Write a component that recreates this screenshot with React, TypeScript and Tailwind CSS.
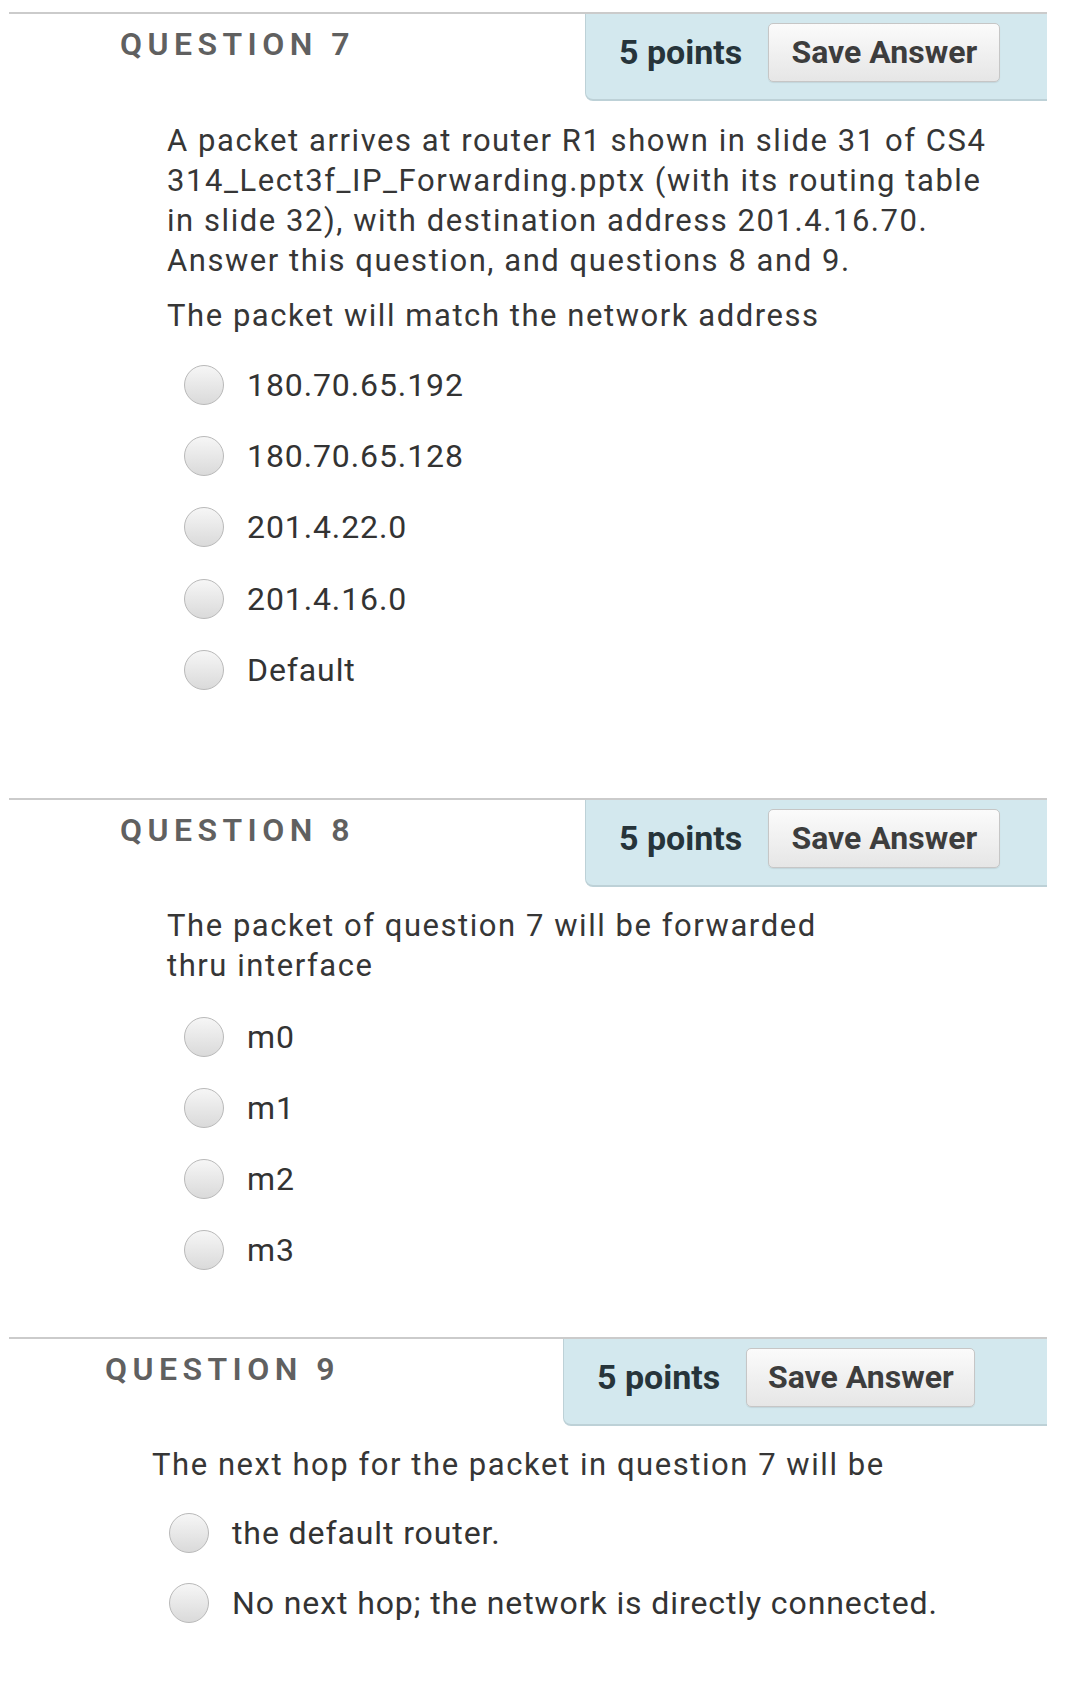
import React from "react";

type Question = {
  num: number;
  lines: string[];
  prompt?: string;
  options: string[];
  wrap: string;
  title: string;
  box: string;
  btn: string;
  body: string;
  opts: string;
  row: string;
};

const QUESTIONS: Question[] = [
  {
    num: 7,
    lines: [
      "A packet arrives at router R1 shown in slide 31 of CS4",
      "314_Lect3f_IP_Forwarding.pptx (with its routing table",
      "in slide 32), with destination address 201.4.16.70.",
      "Answer this question, and questions 8 and 9.",
    ],
    prompt: "The packet will match the network address",
    options: ["180.70.65.192", "180.70.65.128", "201.4.22.0", "201.4.16.0", "Default"],
    wrap: "mt-[12px]",
    title: "ml-[111px]",
    box: "w-[462px] pr-[45px]",
    btn: "w-[232px]",
    body: "ml-[167px] mt-[20px]",
    opts: "ml-[184px] mt-[13px]",
    row: "h-[71.3px]",
  },
  {
    num: 8,
    lines: ["The packet of question 7 will be forwarded", "thru interface"],
    options: ["m0", "m1", "m2", "m3"],
    wrap: "mt-[93px]",
    title: "ml-[111px]",
    box: "w-[462px] pr-[45px]",
    btn: "w-[232px]",
    body: "ml-[167px] mt-[19px]",
    opts: "ml-[184px] mt-[15px]",
    row: "h-[71px]",
  },
  {
    num: 9,
    lines: ["The next hop for the packet in question 7 will be"],
    options: ["the default router.", "No next hop; the network is directly connected."],
    wrap: "mt-[52px]",
    title: "ml-[96px]",
    box: "w-[484px] pr-[70px]",
    btn: "w-[229px]",
    body: "ml-[152px] mt-[19px]",
    opts: "ml-[169px] mt-[13px]",
    row: "h-[70px]",
  },
];

const Radio = () => (
  <span className="block w-[40px] h-[40px] shrink-0 rounded-full border border-[#b9b9b9] bg-gradient-to-b from-[#f6f6f6] to-[#dadada]" />
);

const QuestionBlock = ({ q }: { q: Question }) => (
  <div className={q.wrap}>
    <div className="ml-[9px] w-[1038px] border-t-2 border-[#cbcbcb] flex justify-between">
      <div className={`${q.title} pt-[10px] text-[32px] leading-[40px] font-semibold tracking-[0.17em] text-[#606060]`}>
        QUESTION {q.num}
      </div>
      <div
        className={`${q.box} h-[87px] flex items-center gap-[26px] pl-[33px] pb-[9px] bg-[#d3e8ee] border-b-2 border-l border-[#bdd1d7] rounded-bl-[8px]`}
      >
        <span className="text-[34px] leading-[40px] font-bold text-[#26343a] whitespace-nowrap">5 points</span>
        <button
          className={`${q.btn} h-[59px] shrink-0 rounded-[5px] border border-[#c6c6c6] bg-gradient-to-b from-[#fbfbfb] to-[#e6e6e6] text-[32px] font-bold text-[#3d3d3d] shadow-[0_1px_1px_rgba(0,0,0,0.08)]`}
        >
          Save Answer
        </button>
      </div>
    </div>

    <div className={`${q.body} text-[31px] leading-[40px] tracking-[1.55px] text-[#363636]`}>
      {q.lines.map((l) => (
        <div key={l} className="whitespace-nowrap">{l}</div>
      ))}
      {q.prompt && <div className="mt-[15px] whitespace-nowrap">{q.prompt}</div>}
    </div>

    <div className={q.opts}>
      {q.options.map((o) => (
        <div key={o} className={`${q.row} flex items-center gap-[23px]`}>
          <Radio />
          <span className="text-[32px] leading-[40px] tracking-[0.9px] text-[#333] whitespace-nowrap">{o}</span>
        </div>
      ))}
    </div>
  </div>
);

export default function App() {
  return (
    <div className="w-[1068px] h-[1695px] bg-white overflow-hidden font-['Roboto',_'Noto_Sans',_sans-serif]">
      {QUESTIONS.map((q) => (
        <QuestionBlock key={q.num} q={q} />
      ))}
    </div>
  );
}
